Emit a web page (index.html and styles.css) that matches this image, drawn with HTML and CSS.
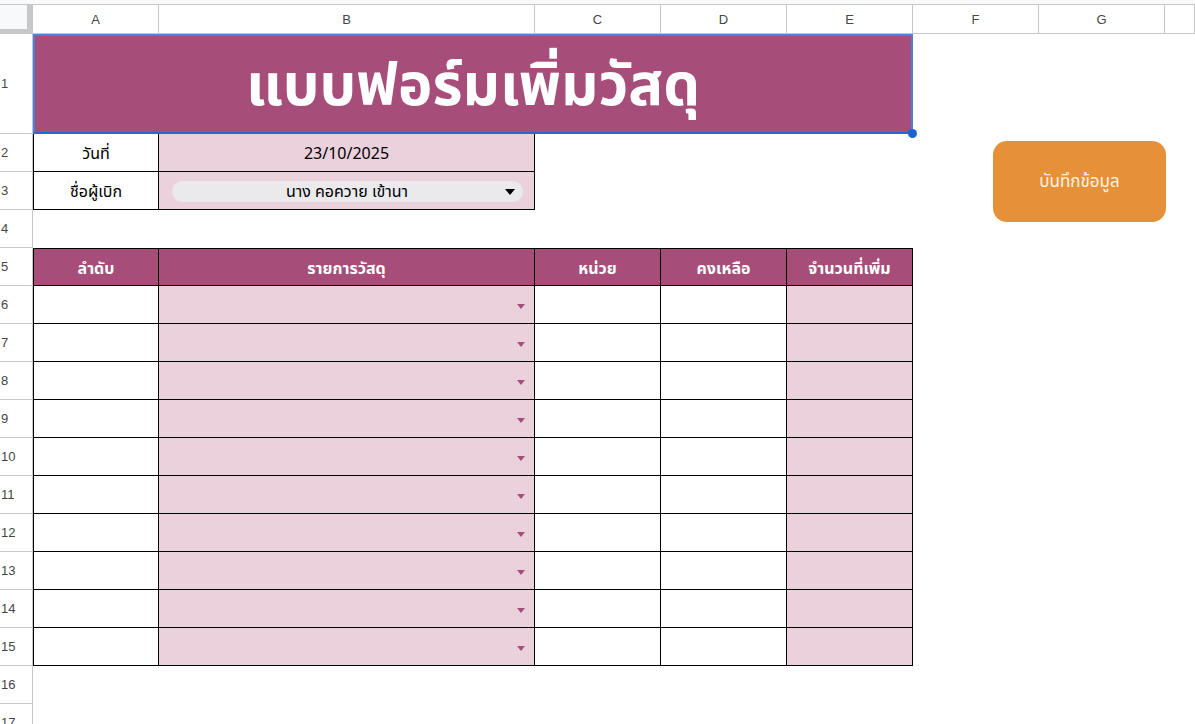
FILE: index.html
```html
<!DOCTYPE html>
<html lang="th">
<head>
    <meta charset="UTF-8">
    <title>แบบฟอร์มเพิ่มวัสดุ</title>
    <link rel="stylesheet" href="styles.css">
</head>
<body>
    <div class="top-strip"></div>

    <div class="col-heads">
        <div class="corner"></div>
        <div class="ch">A</div>
        <div class="ch">B</div>
        <div class="ch">C</div>
        <div class="ch">D</div>
        <div class="ch">E</div>
        <div class="ch">F</div>
        <div class="ch">G</div>
        <div class="ch"></div>
    </div>

    <div class="sheet">
        <div class="row-heads">
            <div class="rh tall"><span>1</span></div>
            <div class="rh"><span>2</span></div>
            <div class="rh"><span>3</span></div>
            <div class="rh"><span>4</span></div>
            <div class="rh"><span>5</span></div>
            <div class="rh"><span>6</span></div>
            <div class="rh"><span>7</span></div>
            <div class="rh"><span>8</span></div>
            <div class="rh"><span>9</span></div>
            <div class="rh"><span>10</span></div>
            <div class="rh"><span>11</span></div>
            <div class="rh"><span>12</span></div>
            <div class="rh"><span>13</span></div>
            <div class="rh"><span>14</span></div>
            <div class="rh"><span>15</span></div>
            <div class="rh"><span>16</span></div>
            <div class="rh"><span>17</span></div>
        </div>

        <div class="cells">
            <!-- แถว 1 -->
            <div class="title">แบบฟอร์มเพิ่มวัสดุ</div>
            <div class="blank"></div>

            <!-- แถว 2-3 -->
            <div class="box first">วันที่</div>
            <div class="box pink">23/10/2025</div>
            <div class="blank rest"></div>

            <div class="box first">ชื่อผู้เบิก</div>
            <div class="box pink">
                <div class="chip">
                    <span class="chip-text">นาง คอควาย เข้านา</span>
                    <span class="chip-arrow"></span>
                </div>
            </div>
            <div class="blank rest"></div>

            <!-- แถว 4 -->
            <div class="blank full"></div>

            <!-- แถว 5 หัวตาราง -->
            <div class="box head first top">ลำดับ</div>
            <div class="box head top">รายการวัสดุ</div>
            <div class="box head top">หน่วย</div>
            <div class="box head top">คงเหลือ</div>
            <div class="box head top">จำนวนที่เพิ่ม</div>
            <div class="blank"></div>
        </div>
        <div class="cells-table" id="tableRows"></div>

        <button class="save-btn">บันทึกข้อมูล</button>
    </div>

    <script src="app.js"></script>
</body>
</html>
```

FILE: app.js
```js
// สร้างแถวข้อมูล 6-15
var rows = document.getElementById('tableRows');
for (var i = 0; i < 10; i++) {
    rows.insertAdjacentHTML('beforeend',
        '<div class="box first"></div>' +
        '<div class="box pink pick"><span class="pick-arrow"></span></div>' +
        '<div class="box"></div>' +
        '<div class="box"></div>' +
        '<div class="box pink"></div>' +
        '<div class="blank"></div>');
}
```

FILE: styles.css
```css
* {
    margin: 0;
    padding: 0;
    box-sizing: border-box;
}

body {
    font-family: Tahoma, 'Leelawadee UI', 'Noto Sans Thai', 'Noto Sans', sans-serif;
    background: #ffffff;
    color: #000000;
    width: 1195px;
    height: 724px;
    overflow: hidden;
}

.top-strip {
    height: 5px;
    background: #f8f9fa;
    border-bottom: 1px solid #c7c7c7;
}

.col-heads {
    display: grid;
    grid-template-columns: 33px 126px 376px 126px 126px 126px 126px 126px 1fr;
    height: 29px;
}

.corner {
    background: #f8f9fa;
    border-right: 6px solid #c7c7c7;
    border-bottom: 5px solid #c7c7c7;
}

.ch {
    border-right: 1px solid #c7c7c7;
    border-bottom: 1px solid #c7c7c7;
    display: flex;
    align-items: center;
    justify-content: center;
    font-family: 'Liberation Sans', Arial, sans-serif;
    font-size: 13px;
    color: #444746;
}

.sheet {
    position: relative;
    display: grid;
    grid-template-columns: 33px 1fr;
    grid-template-rows: auto 1fr;
}

.row-heads {
    grid-row: 1 / 3;
    display: flex;
    flex-direction: column;
    overflow: hidden;
}

.rh {
    height: 38px;
    flex-shrink: 0;
    border-right: 1px solid #c7c7c7;
    border-bottom: 1px solid #c7c7c7;
    display: flex;
    align-items: center;
    font-family: 'Liberation Sans', Arial, sans-serif;
    font-size: 13px;
    color: #444746;
}

.rh.tall {
    height: 100px;
}

.rh span {
    display: block;
    padding-left: 1px;
}

.cells,
.cells-table {
    display: grid;
    grid-template-columns: 126px 376px 126px 126px 126px 1fr;
    grid-auto-rows: 38px;
}

.cells {
    grid-template-rows: 100px;
}

.title {
    grid-column: 1 / 6;
    position: relative;
    background: #a64d79;
    border: 2px solid #4a7fdc;
    border-bottom-color: #2d66cf;
    color: #ffffff;
    font-size: 58px;
    font-weight: bold;
    display: flex;
    align-items: center;
    justify-content: center;
    padding-top: 5px;
}

.title::after {
    content: '';
    position: absolute;
    right: -6px;
    bottom: -6px;
    width: 9px;
    height: 9px;
    border-radius: 50%;
    background: #1a62d6;
}

.blank.rest {
    grid-column: span 4;
}

.blank.full {
    grid-column: span 6;
}

.box {
    border-right: 1px solid #000000;
    border-bottom: 1px solid #000000;
    display: flex;
    align-items: center;
    justify-content: center;
    font-size: 16px;
    padding-top: 3px;
}

.box.first {
    border-left: 1px solid #000000;
}

.box.top {
    border-top: 1px solid #000000;
}

.box.pink {
    background: #ead1dc;
}

.box.head {
    background: #a64d79;
    color: #ffffff;
    font-weight: bold;
}

.chip {
    width: 351px;
    height: 21px;
    background: #eaeaed;
    border-radius: 11px;
    display: flex;
    align-items: center;
    justify-content: center;
    position: relative;
    margin-left: 1px;
    margin-top: -1px;
}

.chip-arrow {
    position: absolute;
    right: 8px;
    top: 8px;
    border-left: 5px solid transparent;
    border-right: 5px solid transparent;
    border-top: 6px solid #000000;
}

.pick {
    justify-content: flex-end;
    padding-right: 9px;
    padding-top: 3px;
}

.pick-arrow {
    border-left: 4px solid transparent;
    border-right: 4px solid transparent;
    border-top: 5px solid #a64d79;
}

.save-btn {
    position: absolute;
    left: 993px;
    top: 107px;
    width: 173px;
    height: 81px;
    border: none;
    border-radius: 14px;
    background: #e69138;
    color: #fdf3e6;
    font-family: inherit;
    font-size: 17px;
}
```
